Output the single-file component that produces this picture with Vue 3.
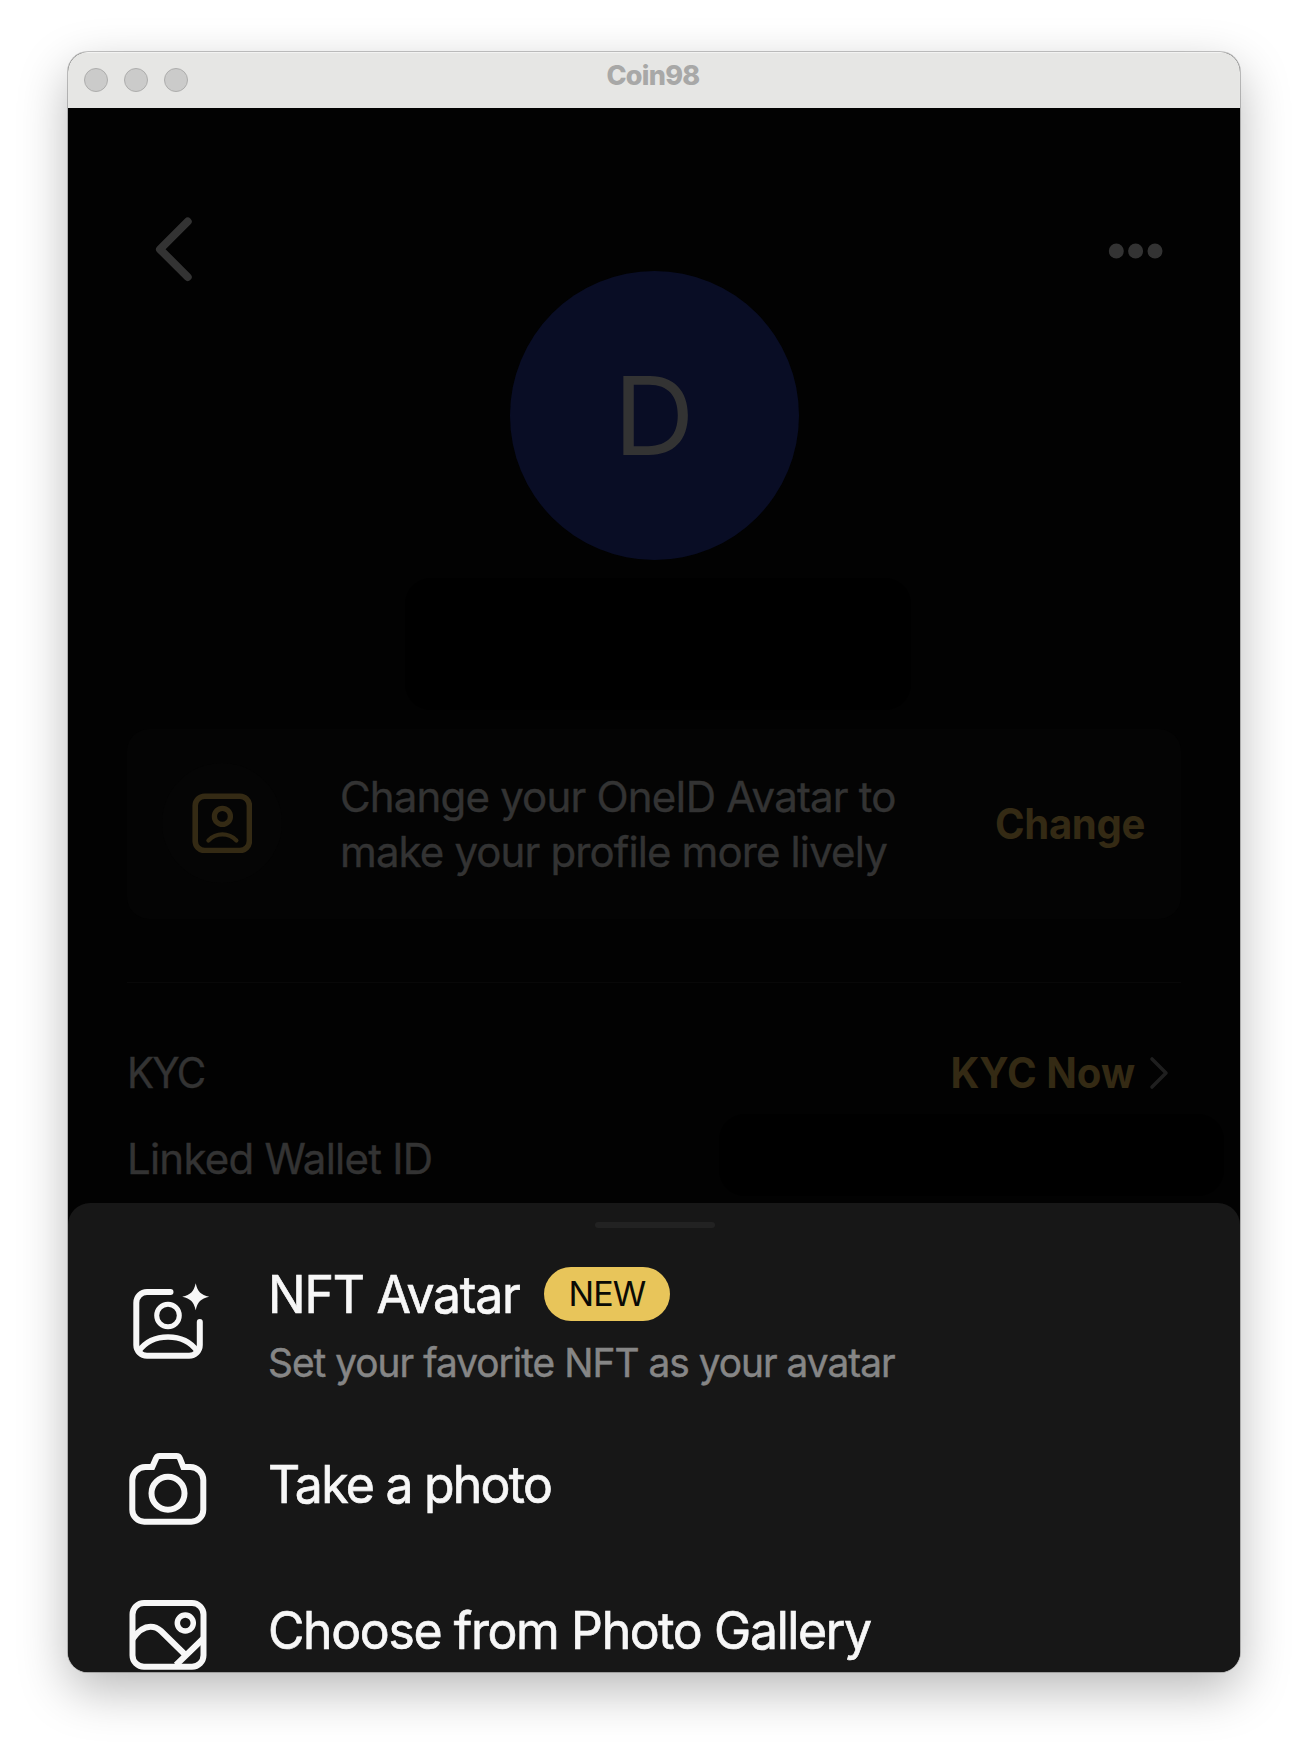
<script setup>
const lights = ['close', 'minimise', 'zoom']
</script>

<template>
  <main class="desktop">
    <section class="window">
      <header class="titlebar">
        <div class="lights">
          <span v-for="l in lights" :key="l" class="light"></span>
        </div>
        <h1 class="title">Coin98</h1>
      </header>

      <div class="screen">
        <nav class="nav">
          <svg class="back" width="44" height="72" viewBox="0 0 44 72" fill="none">
            <path d="M35.7 8.5 8 36.3 35.7 64" stroke="#333" stroke-width="8" stroke-linecap="round" stroke-linejoin="round" />
          </svg>
          <svg class="more" width="56" height="16" viewBox="0 0 56 16" fill="#333">
            <circle cx="8.3" cy="8" r="7.5" />
            <circle cx="27.6" cy="8" r="7.5" />
            <circle cx="47" cy="8" r="7.5" />
          </svg>
        </nav>

        <div class="avatar"><span>D</span></div>
        <div class="name-mask"></div>

        <article class="card">
          <div class="card-icon">
            <svg width="60" height="60" viewBox="0 0 60 60" fill="none" stroke="#342a14">
              <rect x="3.2" y="3.3" width="54.2" height="54.2" rx="9.5" stroke-width="5.6" />
              <circle cx="30.4" cy="23.4" r="8" stroke-width="5.3" />
              <path d="M16.4 47.4Q22.4 41.4 30.4 41.4T44.4 47.4" stroke-width="4.2" stroke-linecap="round" />
            </svg>
          </div>
          <p class="card-text">
            <span class="line-one">Change your OneID Avatar to</span><br />
            <span class="line-two">make your profile more lively</span>
          </p>
          <strong class="change">Change</strong>
        </article>

        <hr class="divider" />

        <div class="row kyc-row">
          <span class="kyc">KYC</span>
          <span class="kyc-link">
            <strong class="kyc-now">KYC Now</strong>
            <svg width="20" height="34" viewBox="0 0 20 34" fill="none">
              <path d="M3 3 17 17 3 31" stroke="#1f1f1f" stroke-width="3.6" stroke-linecap="round" stroke-linejoin="round" />
            </svg>
          </span>
        </div>
        <div class="row wallet-row">
          <span class="wallet">Linked Wallet ID</span>
          <span class="wallet-mask"></span>
        </div>

        <aside class="sheet">
          <span class="handle"></span>

          <div class="option nft">
            <svg width="80" height="80" viewBox="0 0 80 80" fill="none" stroke="#f7f7f7" stroke-width="6" stroke-linecap="round" stroke-linejoin="round">
              <path d="M42.5 12H19A10.7 10.7 0 0 0 8.3 22.7V65.1A10.7 10.7 0 0 0 19 75.8H61.1A10.7 10.7 0 0 0 71.8 65.1V42" />
              <circle cx="40" cy="35.5" r="11.3" stroke-width="5" />
              <path d="M11 71C17 62.5 27 57 40 57S63 62.5 69 71" stroke-width="5.6" />
              <path d="M67.7 3.2C69.7 11.7 72.7 14.7 81.2 16.7C72.7 18.7 69.7 21.7 67.7 30.2C65.7 21.7 62.7 18.7 54.2 16.7C62.7 14.7 65.7 11.7 67.7 3.2Z" fill="#f7f7f7" stroke="none" />
            </svg>
            <div class="copy">
              <div class="heading">
                <span class="label nft-label">NFT Avatar</span>
                <span class="badge">NEW</span>
              </div>
              <p class="hint">Set your favorite NFT as your avatar</p>
            </div>
          </div>

          <div class="option photo">
            <svg width="80" height="80" viewBox="0 0 80 80" fill="none" stroke="#f7f7f7" stroke-width="6">
              <path d="M24.3 20L28 11.5Q29 9 31.5 9H48.5Q51 9 52 11.5L55.3 20H62.3A13 13 0 0 1 75.3 33V62.7A12 12 0 0 1 63.3 74.7H16.3A12 12 0 0 1 4.3 62.7V33A13 13 0 0 1 17.3 20Z" />
              <circle cx="40" cy="46.3" r="16.5" />
            </svg>
            <span class="label photo-label">Take a photo</span>
          </div>

          <div class="option gallery">
            <svg width="80" height="80" viewBox="0 0 80 80" fill="none" stroke="#f7f7f7" stroke-width="6">
              <rect x="4.5" y="11" width="71" height="63.7" rx="11.5" />
              <circle cx="57.3" cy="31" r="8" stroke-width="5.5" />
              <path d="M4.5 47Q13 34.7 22.5 34.7Q28.5 34.7 33 39L57 62.5M75.3 46.5L48 73" />
            </svg>
            <span class="label gallery-label">Choose from Photo Gallery</span>
          </div>
        </aside>
      </div>
    </section>
  </main>
</template>

<style>
body {
  background: #fff;
}
</style>

<style scoped>
.desktop {
  box-sizing: border-box;
  width: 1308px;
  height: 1756px;
  padding: 52px 68px 84px;
  background: #fff;
  font-family: Inter, "Liberation Sans", sans-serif;
  overflow: hidden;
}
.window {
  height: 1620px;
  border-radius: 20px;
  overflow: hidden;
  background: #020202;
  display: flex;
  flex-direction: column;
  box-shadow: 0 0 0 1px rgba(0, 0, 0, 0.22), 0 18px 50px rgba(0, 0, 0, 0.28);
}
.titlebar {
  height: 56px;
  box-sizing: border-box;
  background: #e6e6e4;
  box-shadow: inset 0 1px 1px #f4f4f3;
  display: grid;
  grid-template-columns: 1fr auto 1fr;
  padding: 0 18px 0 16px;
}
.lights {
  display: flex;
  gap: 16px;
  padding-top: 16px;
}
.light {
  box-sizing: border-box;
  width: 24px;
  height: 24px;
  border-radius: 50%;
  border: 1px solid #adadac;
  background: #cbcbca;
}
.title {
  margin: 7px 0 0;
  font-size: 27px;
  line-height: 34px;
  font-weight: 800;
  letter-spacing: -0.7px;
  color: #a8a8a7;
}
.screen {
  position: relative;
  flex: 1;
  display: flex;
  flex-direction: column;
  color: #333;
}
.nav {
  display: flex;
  justify-content: space-between;
  padding: 105px 76px 0 84px;
  height: 58px;
}
.more {
  margin-top: 30px;
}
.avatar {
  width: 289px;
  height: 289px;
  border-radius: 50%;
  background: #090d25;
  margin-left: 442px;
  display: flex;
  justify-content: center;
  font-size: 108px;
  line-height: 289px;
}
.avatar span {
  transform: scaleX(1.04);
  margin-right: 2px;
}
.name-mask {
  width: 506px;
  height: 132px;
  margin: 18px 0 19px 337px;
  border-radius: 26px;
  background: #000;
}
.card {
  display: flex;
  align-items: center;
  box-sizing: border-box;
  height: 190px;
  margin: 0 59px;
  padding: 0 36px 2px 35px;
  border-radius: 22px;
  background: #040404;
}
.card-icon {
  width: 120px;
  height: 120px;
  border-radius: 50%;
  background: #050505;
  display: flex;
  align-items: center;
  justify-content: center;
}
.card-text {
  margin: 2px auto 0 58px;
  font-size: 42px;
  line-height: 55.4px;
  white-space: nowrap;
  -webkit-text-stroke: 0.4px #333;
}
.line-one {
  letter-spacing: -0.83px;
}
.line-two {
  letter-spacing: -0.88px;
}
.change,
.kyc-now {
  font-size: 42px;
  line-height: 55px;
  font-weight: 700;
  color: #342a14;
  transform-origin: right;
}
.change {
  letter-spacing: -0.4px;
  transform: scaleX(0.955);
}
.kyc-now {
  transform: scaleX(0.956);
}
.divider {
  width: 1054px;
  height: 1px;
  margin: 63px 59px 0;
  border: 0;
  background: #080808;
}
.row {
  display: flex;
  justify-content: space-between;
  font-size: 42px;
  line-height: 55px;
  white-space: nowrap;
}
.kyc,
.wallet {
  -webkit-text-stroke: 0.4px #333;
}
.kyc-row {
  margin: 62px 71px 0 59px;
}
.kyc {
  letter-spacing: -1.8px;
  transform: scaleX(0.96);
  transform-origin: left;
}
.kyc-link {
  display: flex;
  align-items: center;
  gap: 14px;
}
.wallet-row {
  margin: 14px 16px 0 59px;
}
.wallet {
  margin-top: 17px;
  letter-spacing: -0.78px;
}
.wallet-mask {
  width: 505px;
  height: 82px;
  border-radius: 26px;
  background: #000;
}
.sheet {
  position: absolute;
  inset: 1095px 0 0;
  border-radius: 22px 22px 0 0;
  background: #171717;
  color: #f7f7f7;
  display: flex;
  flex-direction: column;
}
.handle {
  width: 120px;
  height: 6px;
  margin: 19px 0 0 527px;
  border-radius: 3px;
  background: #222;
}
.option {
  display: flex;
  align-items: flex-start;
  margin-left: 60px;
  white-space: nowrap;
}
.option > svg {
  flex: none;
  overflow: visible;
}
.label {
  font-size: 52px;
  line-height: 64px;
  margin-left: 59.5px;
  -webkit-text-stroke: 0.7px #f7f7f7;
  transform: scaleX(0.96);
  transform-origin: left;
}
.nft {
  margin-top: 34px;
  height: 150px;
}
.nft > svg {
  margin-top: 18px;
}
.heading {
  display: flex;
  align-items: center;
  height: 66px;
}
.nft-label {
  width: 276.5px;
  letter-spacing: -1.25px;
}
.badge {
  box-sizing: border-box;
  width: 126px;
  height: 54px;
  border-radius: 27px;
  margin-bottom: 2px;
  background: #e8c55a;
  color: #0a0a05;
  font-size: 34px;
  line-height: 54px;
  letter-spacing: -0.9px;
  text-align: center;
}
.hint {
  margin: 8.5px 0 0 59.5px;
  font-size: 40px;
  line-height: 52px;
  letter-spacing: -1px;
  color: #868686;
  -webkit-text-stroke: 0.5px #868686;
  transform: scaleX(0.97);
  transform-origin: left;
}
.photo {
  margin-top: 41px;
  height: 145px;
}
.photo > svg,
.gallery > svg {
  margin-top: -6px;
}
.photo-label {
  letter-spacing: -1.8px;
}
.gallery-label {
  margin-top: 1px;
  letter-spacing: -1.42px;
}
</style>
